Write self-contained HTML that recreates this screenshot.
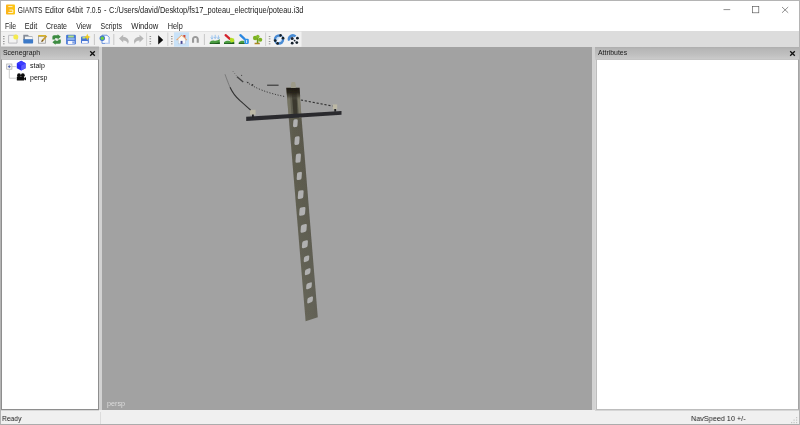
<!DOCTYPE html>
<html><head><meta charset="utf-8"><title>GIANTS Editor</title>
<style>
*{box-sizing:border-box;margin:0;padding:0}
html,body{width:800px;height:425px;overflow:hidden;background:#f0f0f0;font-family:"Liberation Sans",sans-serif;color:#111}
.abs{position:absolute}
.gs,.ph,#view>svg{will-change:transform}
.sx{display:inline-block;transform-origin:0 50%;white-space:nowrap;will-change:transform}
#frame{left:0;top:0;width:800px;height:425px;border:1px solid #b4b4b4;border-bottom-color:#acacac;z-index:10;pointer-events:none}
#title{left:0;top:0;width:800px;height:19px;background:#fff}
#title .t{left:18px;top:6px;font-size:8px;line-height:10px;color:#1c1c1c}
#menu{left:0;top:19px;width:800px;height:12px;background:#fff}
#menu span{position:absolute;top:2px;font-size:8px;line-height:10px;color:#1c1c1c}
#tool{left:0;top:31px;width:800px;height:16px;background:#dcdcdc}
.ph{position:absolute;left:0;top:0;height:13px;width:100%;background:linear-gradient(#aeaeae,#b6b6b6 15%,#c0c0c0 60%,#cdcdcd);font-size:6.9px;line-height:11px;color:#1a1a1a;padding-left:3px}
#left{left:0;top:47px;width:99px;height:364px;background:#d6d6d6}
#left .body{left:1px;top:12px;width:98px;height:351px;background:#fff;border:1px solid #8e8e8e;border-top-color:#c4c4c4}
#spl1{left:99px;top:47px;width:3px;height:363px;background:#d2d2d2}
#view{left:102px;top:47px;width:490.500px;height:363px;background:#a2a2a2;overflow:hidden}
#spl2{left:592px;top:47px;width:4px;height:363px;background:#d2d2d2}
#right{left:595px;top:47px;width:205px;height:364px;background:#d6d6d6}
#right .body{left:0.500px;top:12px;width:203px;height:350.500px;background:#fff;border:1px solid #bdbdbd;border-right-color:#a4a4a4;border-top-color:#c4c4c4}
#status{left:0;top:411px;width:800px;height:14px;background:#f0f0f0;font-size:7.8px;line-height:10px;color:#1c1c1c}
#status span{top:3px}
.tree{font-size:7px;line-height:9px;color:#111}
</style></head><body>
<div id="title" class="abs">
  <svg class="abs" style="left:5px;top:3px" width="11" height="13" viewBox="5 3 11 13"><defs><linearGradient id="lg" x1="0" y1="0" x2="1" y2="0"><stop offset="0" stop-color="#fbb21a"/><stop offset="1" stop-color="#fdc812"/></linearGradient></defs><rect x="6" y="4.600" width="9" height="9.800" rx="0.900" fill="url(#lg)"/><path d="M8.300 6.600h4.200M9.400 10h3.400v2.500h-4.500" stroke="#fff" stroke-width="0.800" fill="none"/></svg>
  <svg class="abs gs" style="left:0;top:0" width="320" height="19" viewBox="0 0 320 19" font-family="Liberation Sans, sans-serif"><text x="17.8" y="12.9" font-size="8.8" fill="#222" textLength="24.7" lengthAdjust="spacingAndGlyphs">GIANTS</text><text x="44.9" y="12.9" font-size="8.8" fill="#222" textLength="19.4" lengthAdjust="spacingAndGlyphs">Editor</text><text x="66.9" y="12.9" font-size="8.8" fill="#222" textLength="16.1" lengthAdjust="spacingAndGlyphs">64bit</text><text x="86.2" y="12.9" font-size="8.8" fill="#222" textLength="15" lengthAdjust="spacingAndGlyphs">7.0.5</text><text x="104.1" y="12.9" font-size="8.8" fill="#222" textLength="2.5" lengthAdjust="spacingAndGlyphs">-</text><text x="109" y="12.9" font-size="8.8" fill="#222" textLength="194.5" lengthAdjust="spacingAndGlyphs">C:/Users/david/Desktop/fs17_poteau_electrique/poteau.i3d</text></svg>
  <svg class="abs" style="left:715px;top:0" width="85" height="19" viewBox="715 0 85 19"><g stroke="#555" stroke-width="0.650" fill="none"><path d="M723.500 9.600H730.200"/><rect x="752.500" y="6.500" width="6.300" height="6.300"/><path d="M782 7L788.200 12.800M788.200 7L782 12.800"/></g></svg>
</div>
<div id="menu" class="abs"><svg class="abs gs" style="left:0;top:0" width="200" height="12" viewBox="0 19 200 12" font-family="Liberation Sans, sans-serif"><text x="5" y="28.9" font-size="8.8" fill="#222" textLength="11" lengthAdjust="spacingAndGlyphs">File</text><text x="24.7" y="28.9" font-size="8.8" fill="#222" textLength="12.5" lengthAdjust="spacingAndGlyphs">Edit</text><text x="46" y="28.9" font-size="8.8" fill="#222" textLength="21" lengthAdjust="spacingAndGlyphs">Create</text><text x="76.2" y="28.9" font-size="8.8" fill="#222" textLength="15" lengthAdjust="spacingAndGlyphs">View</text><text x="100.6" y="28.9" font-size="8.8" fill="#222" textLength="21.3" lengthAdjust="spacingAndGlyphs">Scripts</text><text x="131.2" y="28.9" font-size="8.8" fill="#222" textLength="27.2" lengthAdjust="spacingAndGlyphs">Window</text><text x="167.7" y="28.9" font-size="8.8" fill="#222" textLength="15" lengthAdjust="spacingAndGlyphs">Help</text></svg></div>
<div id="tool" class="abs"><svg class="abs" style="left:0;top:0" width="800" height="16" viewBox="0 31 800 16">
<rect x="0" y="31.6" width="301.5" height="15.2" fill="#f1f1f1"/>
<rect x="0" y="46.500" width="99" height="0.500" fill="#b8b8b8"/>
<g stroke="#c8c8c8" stroke-width="0.8"><path d="M146.6 32.5V46M167.8 32.5V46M265.6 32.5V46"/></g>
<g stroke="#bdbdbd" stroke-width="0.8"><path d="M94.4 34V45M113.8 34V45M204.4 34V45"/></g>
<g filter="url(#tbl)"><rect x="3" y="36" width="1.600" height="0.900" fill="#8a8a8a"/><rect x="3" y="38.4" width="1.600" height="0.900" fill="#8a8a8a"/><rect x="3" y="41" width="1.600" height="0.900" fill="#8a8a8a"/><rect x="3" y="43.4" width="1.600" height="0.900" fill="#8a8a8a"/></g><g filter="url(#tbl)"><rect x="149.5" y="36" width="1.600" height="0.900" fill="#8a8a8a"/><rect x="149.5" y="38.4" width="1.600" height="0.900" fill="#8a8a8a"/><rect x="149.5" y="41" width="1.600" height="0.900" fill="#8a8a8a"/><rect x="149.5" y="43.4" width="1.600" height="0.900" fill="#8a8a8a"/></g><g filter="url(#tbl)"><rect x="171" y="36" width="1.600" height="0.900" fill="#8a8a8a"/><rect x="171" y="38.4" width="1.600" height="0.900" fill="#8a8a8a"/><rect x="171" y="41" width="1.600" height="0.900" fill="#8a8a8a"/><rect x="171" y="43.4" width="1.600" height="0.900" fill="#8a8a8a"/></g><g filter="url(#tbl)"><rect x="268.8" y="36" width="1.600" height="0.900" fill="#8a8a8a"/><rect x="268.8" y="38.4" width="1.600" height="0.900" fill="#8a8a8a"/><rect x="268.8" y="41" width="1.600" height="0.900" fill="#8a8a8a"/><rect x="268.8" y="43.4" width="1.600" height="0.900" fill="#8a8a8a"/></g>
<g filter="url(#tbl)">
<!-- new -->
<g><path d="M8.600 35.300h8.400v7.800h-8.400z" fill="#f3f3f3" stroke="#b8b8bc" stroke-width="0.9"/><circle cx="15.800" cy="36.900" r="2.500" fill="#f4ea50"/></g>
<!-- open -->
<g><path d="M23.300 34.800h4.600l1 1.200h3.400v4h-9z" fill="#848c98"/><path d="M25 36.600h7v3h-7z" fill="#f4f4f4"/><path d="M23.300 39.200h9.800v3.600q0 .8-.8 .8h-8.200q-.8 0-.8-.8z" fill="#3c7ac8"/></g>
<!-- edit -->
<g><rect x="38.500" y="36.400" width="6.900" height="6.800" fill="#efefef" stroke="#9a9a9a" stroke-width="0.8"/><rect x="38.100" y="34.900" width="8" height="1.700" rx="0.5" fill="#d8b428"/><path d="M41.300 42l.7-2.300 3.900-4.300 1.300 1.100-3.900 4.400z" fill="#c89a2a"/><path d="M41.300 42l.7-2.300 1.300 1.200z" fill="#5a4018"/></g>
<!-- refresh -->
<g fill="#3c8c42"><path d="M52.400 39.400v-2.600q0-1.600 1.600-1.600h3.600v-1l3.200 2.600-3.200 2.600v-1.200h-2.600v1.200z"/><path d="M60.800 39.600v2.600q0 1.600-1.600 1.600h-3.600v1l-3.200-2.600 3.200-2.600v1.200h2.600v-1.200z"/></g>
<!-- save -->
<g><rect x="66.100" y="34.700" width="9.800" height="9.800" rx="1.200" fill="#4676d6"/><rect x="68.200" y="35.500" width="5.600" height="2" fill="#b4e084"/><rect x="67.400" y="38" width="7.200" height="2.200" fill="#8ab0ec"/><rect x="67.800" y="41" width="6.600" height="3" fill="#f4f6fc"/><rect x="72.500" y="41.400" width="1.200" height="2.200" fill="#4676d6"/></g>
<!-- save as -->
<g><rect x="81" y="36.400" width="7.800" height="7" rx="0.900" fill="#4676d6"/><rect x="82.400" y="37" width="3" height="1.600" fill="#b4e084"/><rect x="82" y="41" width="5.800" height="2.300" fill="#f4f6fc"/><path d="M87.300 33.800l1 2.200 2.300 1-2.300 1-1 2.200-1-2.200-2.300-1 2.300-1z" fill="#f2cc20"/></g>
<!-- import -->
<g><path d="M102 35.200h5l2.200 2.200v6h-7.200z" fill="#f8fafe" stroke="#6a94dc" stroke-width="1"/><path d="M105 43.400h4.200v-5" fill="none" stroke="#c0d2f2" stroke-width="1"/><circle cx="102.300" cy="38.200" r="2.700" fill="#3f70d0"/><circle cx="102.300" cy="38.200" r="1.700" fill="#6ad040"/></g>
<!-- undo -->
<g fill="#b6b6b6"><path d="M119 38.400l4.200-3.600v2.200c3.200 0 5.500 1.800 5.500 4.600 0 1-.3 1.800-.9 2.400-.2-2.200-1.700-3.600-4.600-3.600v2z"/></g>
<!-- redo -->
<g fill="#b6b6b6"><path d="M143.700 38.400l-4.200-3.600v2.200c-3.200 0-5.500 1.800-5.500 4.600 0 1 .3 1.800.9 2.400.2-2.200 1.700-3.600 4.600-3.600v2z"/></g>
<!-- play -->
<path d="M158.200 35.200v9.400l5-4.700z" fill="#0a0a0a"/>
<!-- home (active) -->
<rect x="174" y="32.300" width="15" height="14.400" fill="#c9e2f8"/>
<g><rect x="178.200" y="38.400" width="7.200" height="5.500" fill="#fafafa" stroke="#b0bccc" stroke-width="0.500"/><path d="M183.300 34.900h2.100v3.400l-2.100-1.600z" fill="#d04a3a"/><path d="M176.200 39.700l5.400-5 5.600 5-.8.700-4.800-4.200-4.600 4.200z" fill="#eaa060"/><path d="M177.600 39.400l4-3.600 4.200 3.600z" fill="#fdf6ee"/><rect x="180.600" y="40.900" width="1.900" height="3" fill="#4a4a98"/></g>
<!-- magnet -->
<path d="M192 42.700v-3.400c0-2 1.300-3.300 3.400-3.300s3.400 1.300 3.400 3.300v3.400h-2.100v-3.400c0-.8-.5-1.300-1.300-1.300s-1.300.5-1.300 1.300v3.400z" fill="#9a9a9a"/>
<!-- terrain sculpt -->
<g><path d="M209.800 43.900v-2c1.400-1.200 2.800-1.600 4.600-1.200 1.800.4 3.600-.2 5.400-1.600v4.800z" fill="#4a9c40"/><path d="M209.800 43.900v-.9c3.200.5 7 .3 10-.8v1.700z" fill="#1f5a1f"/><g stroke="#9cc4ee" stroke-width="1" fill="none"><path d="M212 35.400v3.600M210.800 37.400l1.200 1.800 1.200-1.800M215.200 34.800v3.600M214 36.800l1.200 1.800 1.200-1.800M218.400 35.400v3.600M217.200 37.400l1.200 1.800 1.200-1.800"/></g></g>
<!-- paint red -->
<g><path d="M224 43.900v-1.600c1.800-1.400 3.600-1.700 5.400-1.300 1.600.4 3.200.1 4.800-.9v3.800z" fill="#4a9c40"/><path d="M224 43.900v-.8c3.200.4 7 .2 10.200-.8v1.600z" fill="#1f5a1f"/><path d="M225.600 35.200l4.200 3.600" stroke="#d4202c" stroke-width="2.300" stroke-linecap="round"/><path d="M229.800 38.600l1.400-.8 3 1-.2 3-2.600.6-1.600-1.600z" fill="#b4e024"/></g>
<!-- paint blue -->
<g><path d="M238.800 43.900v-1.600c1.800-1.400 3.600-1.700 5.400-1.300v2.900z" fill="#4a9c40"/><path d="M238.800 43.900v-.8c2 .3 4 .3 6-.1v.9z" fill="#1f5a1f"/><path d="M240.400 35.200l4 3.600" stroke="#2a86e0" stroke-width="2.300" stroke-linecap="round"/><rect x="244.400" y="38.800" width="4.400" height="5.200" rx="1.300" fill="#2a90e8"/><rect x="246.200" y="40" width="0.900" height="3" fill="#e8f6ff"/></g>
<!-- tree -->
<g><path d="M254.600 42.800h5.200v1.400h-5.200z" fill="#b08424"/><path d="M256.800 34.900h1.600v8.200h-1.600z" fill="#6e9c1c"/><ellipse cx="255.200" cy="38" rx="2.300" ry="2.200" fill="#7cb224"/><ellipse cx="260.200" cy="39.800" rx="2.100" ry="2" fill="#7cb224"/><ellipse cx="257.800" cy="36.600" rx="1.800" ry="1.700" fill="#86bc2c"/></g>
<!-- sphere icons -->
<g><circle cx="279" cy="39.500" r="5.200" fill="#4a8cd4"/><circle cx="279" cy="39.500" r="2.800" fill="#cfe2f6"/><path d="M281.500 35.800l-5.500 6.500 1.500 1.200 5.500-6z" fill="#f4f8fc"/><circle cx="280.600" cy="35.400" r="1.300" fill="#16202c"/><circle cx="283" cy="38.200" r="1.400" fill="#16202c"/><circle cx="275.200" cy="40.600" r="1.400" fill="#16202c"/><circle cx="277.600" cy="43.400" r="1.400" fill="#16202c"/></g>
<g><circle cx="293" cy="39.500" r="5.200" fill="#f2f4f8"/><path d="M288 41a5.200 5.200 0 0 1 8.400-5.600l-1.600 1.800a3 3 0 0 0-4.600 3z" fill="#4a8cd4"/><circle cx="292.200" cy="38.400" r="1.500" fill="#1c2430"/><circle cx="297.400" cy="38.200" r="1.400" fill="#16202c"/><circle cx="296.800" cy="42.600" r="1.400" fill="#16202c"/><circle cx="292.200" cy="43.200" r="1.400" fill="#16202c"/><circle cx="294.600" cy="40.600" r="0.900" fill="#16202c"/></g>
</g>
<defs><filter id="tbl" x="-2%" y="-20%" width="104%" height="140%"><feGaussianBlur stdDeviation="0.32"/></filter></defs>
</svg></div>
<div id="left" class="abs"><div class="ph">Scenegraph</div>
<svg class="abs" style="left:89px;top:3px" width="7" height="7" viewBox="0 0 7 7"><path d="M1.200 1.200L5.800 5.800M5.800 1.200L1.200 5.800" stroke="#111" stroke-width="1.300"/></svg>
<div class="abs body"></div><svg class="abs" style="left:0;top:0" width="99" height="40" viewBox="0 47 99 40">
<path d="M9.300 69.500V78.200H16" stroke="#b8b8b8" stroke-width="0.700" fill="none"/>
<path d="M12 66.600H16.500" stroke="#b8b8b8" stroke-width="0.700"/>
<rect x="6.700" y="64" width="5.200" height="5.200" fill="#f4f4f4" stroke="#a8a8a8" stroke-width="0.700"/>
<path d="M7.900 66.600h2.800M9.300 65.200v2.800" stroke="#3a50a8" stroke-width="0.800"/>
<g><path d="M16.800 63.200l4.400-2.400 4.400 2.400v5l-4.400 2.300-4.400-2.300z" fill="#2a2af4"/><path d="M21.200 65.600l4.400-2.400v5l-4.400 2.300z" fill="#5a5aff"/><path d="M16.800 63.200l4.400-2.400 4.400 2.400-4.400 2.400z" fill="#3c3cff"/></g>
<g fill="#0a0a0a"><circle cx="19" cy="75.200" r="1.900"/><circle cx="22.800" cy="75.200" r="1.900"/><rect x="16.800" y="76.600" width="7.400" height="3.800" rx="0.500"/><path d="M24 78.400l2-1.400v3.400l-2-1.200z"/></g>
</svg>
<span class="abs tree sx" style="left:29.500px;top:61px;transform-origin:0 0;transform:translateY(-47px)">stalp</span>
<span class="abs tree sx" style="left:29.700px;top:73.100px;transform-origin:0 0;transform:translateY(-47px)">persp</span></div>
<div id="spl1" class="abs"></div>
<div id="view" class="abs"><svg class="abs" style="left:0;top:0" width="491" height="363" viewBox="102 47 491 363">
<defs>
<linearGradient id="pg" x1="0" y1="0" x2="1" y2="0"><stop offset="0" stop-color="#78766a"/><stop offset="0.22" stop-color="#6b6a5b"/><stop offset="1" stop-color="#626156"/></linearGradient>
<linearGradient id="vg" x1="0" y1="0" x2="0" y2="1"><stop offset="0" stop-color="#1a1810" stop-opacity="0.2"/><stop offset="0.35" stop-color="#1a1810" stop-opacity="0.16"/><stop offset="1" stop-color="#1a1810" stop-opacity="0"/></linearGradient>
<linearGradient id="tg" x1="0" y1="0" x2="0" y2="1"><stop offset="0" stop-color="#1e1a14"/><stop offset="0.4" stop-color="#262219" stop-opacity="0.95"/><stop offset="0.7" stop-color="#3a362b" stop-opacity="0.6"/><stop offset="1" stop-color="#6f6d5e" stop-opacity="0"/></linearGradient>
<filter id="bl" x="-5%" y="-5%" width="110%" height="110%"><feGaussianBlur stdDeviation="0.5"/></filter>
</defs>
<g filter="url(#bl)">
<polygon points="286.300,88.200 299.100,88.200 317.800,317.300 305.600,321.200" fill="url(#pg)"/><polygon points="286.300,88.200 299.100,88.200 317.800,317.300 305.600,321.200" fill="url(#vg)"/>
<polygon points="297,90 299.500,90 301.600,118 299,118" fill="#8a8874" opacity="0.7"/>
<polygon points="286.600,90 289.600,90 291.600,116 288.600,116" fill="#8a8874" opacity="0.5"/>
<polygon points="291.400,89 296.300,89 297.600,116 293.600,116" fill="#2f2c24" opacity="0.72"/>
<polygon points="286.300,87.800 299.600,87.800 300.400,100 287.300,100" fill="url(#tg)"/>
<polygon points="291.100,88 290.700,85 291.700,82 295,82 295.900,85 295.700,88" fill="#9e9b8a"/>
<g fill="#b0b0b0"><rect x="293.2" y="119.3" width="4.4" height="7.8" rx="1.5" transform="rotate(4 295.4 123.2) translate(295.4 123.2) skewY(-8) translate(-295.4 -123.2)"/><rect x="294.6" y="136.4" width="4.8" height="8.4" rx="1.5" transform="rotate(4 297 140.6) translate(297 140.6) skewY(-10) translate(-297 -140.6)"/><rect x="295.7" y="153.7" width="5.0" height="9" rx="1.5" transform="rotate(4 298.2 158.2) translate(298.2 158.2) skewY(-10) translate(-298.2 -158.2)"/><rect x="296.9" y="172.0" width="4.8" height="7.8" rx="1.5" transform="rotate(4 299.3 175.9) translate(299.3 175.9) skewY(-12) translate(-299.3 -175.9)"/><rect x="298.0" y="190.4" width="5.4" height="8.4" rx="1.5" transform="rotate(4 300.7 194.6) translate(300.7 194.6) skewY(-14) translate(-300.7 -194.6)"/><rect x="299.4" y="207.3" width="5.8" height="8.2" rx="1.5" transform="rotate(4 302.3 211.4) translate(302.3 211.4) skewY(-16) translate(-302.3 -211.4)"/><rect x="300.8" y="224.3" width="5.8" height="8.0" rx="1.5" transform="rotate(4 303.7 228.3) translate(303.7 228.3) skewY(-18) translate(-303.7 -228.3)"/><rect x="302.1" y="240.6" width="5.6" height="7.2" rx="1.5" transform="rotate(4 304.9 244.2) translate(304.9 244.2) skewY(-20) translate(-304.9 -244.2)"/><rect x="303.9" y="255.9" width="5.2" height="5.8" rx="1.5" transform="rotate(4 306.5 258.8) translate(306.5 258.8) skewY(-22) translate(-306.5 -258.8)"/><rect x="305.0" y="268.8" width="5.4" height="5.8" rx="1.5" transform="rotate(4 307.7 271.7) translate(307.7 271.7) skewY(-24) translate(-307.7 -271.7)"/><rect x="306.3" y="282.9" width="5.4" height="5.8" rx="1.5" transform="rotate(4 309 285.8) translate(309 285.8) skewY(-24) translate(-309 -285.8)"/><rect x="307.4" y="297.0" width="5.4" height="5.8" rx="1.5" transform="rotate(4 310.1 299.9) translate(310.1 299.9) skewY(-24) translate(-310.1 -299.9)"/></g>
<polygon points="246.200,116.800 341.500,111 341.500,114.800 246.200,120.900" fill="#2a2a2e"/>
<rect x="250" y="109.800" width="5.600" height="5" fill="#bcb8a5"/><rect x="252" y="114.500" width="1.800" height="3" fill="#222"/>
<rect x="332.800" y="104.400" width="4.400" height="5" fill="#bcb8a5"/><rect x="334.300" y="109" width="1.800" height="2.600" fill="#222"/>
<path d="M225 74.200 C227 80 228.600 84 230 87.200" stroke="#444" stroke-width="0.700" fill="none" opacity="0.6"/><path d="M230 87.200 C233 93.600 236.500 97.600 240 100.600 S247.500 107.300 250.600 110" stroke="#303030" stroke-width="1.100" fill="none"/>
<path d="M232.700 71 L237 76.400" stroke="#444" stroke-width="0.900" fill="none" stroke-dasharray="0.900 1.900" opacity="0.7"/><path d="M246.800 82.200 C254 87.600 268 93.500 285.800 96.700" stroke="#353535" stroke-width="1" fill="none" stroke-dasharray="1.100 1.700"/><circle cx="252.500" cy="84.900" r="0.800" fill="#333"/><circle cx="247.800" cy="82.400" r="0.700" fill="#333"/><circle cx="241.600" cy="75.300" r="0.600" fill="#444"/>
<path d="M237 76.800 L243.200 82" stroke="#444" stroke-width="1.400"/>
<path d="M300.800 100 L332.600 106" stroke="#333" stroke-width="1.100" stroke-dasharray="2.200 1.800"/>
<path d="M267.100 85.200 H278.600" stroke="#333" stroke-width="1.100"/>
</g>
<text x="107" y="405.500" font-size="7.400" fill="#dcdcdc" font-family="Liberation Sans, sans-serif" textLength="18" lengthAdjust="spacingAndGlyphs">persp</text>
</svg></div>
<div id="spl2" class="abs"></div>
<div id="right" class="abs"><div class="ph">Attributes</div>
<svg class="abs" style="left:194px;top:3px" width="7" height="7" viewBox="0 0 7 7"><path d="M1.200 1.200L5.800 5.800M5.800 1.200L1.200 5.800" stroke="#111" stroke-width="1.300"/></svg>
<div class="abs body"></div></div>
<div id="status" class="abs"><span class="abs sx" style="left:2px;transform:scaleX(0.86)">Ready</span><span class="abs sx" style="left:691.400px;transform:scaleX(0.93)">NavSpeed 10 +/-</span>
<svg class="abs" style="left:790px;top:5px" width="9" height="9" viewBox="0 0 9 9"><g fill="#c4c4c4"><rect x="6" y="6" width="1.200" height="1.200"/><rect x="6" y="3.500" width="1.200" height="1.200"/><rect x="3.500" y="6" width="1.200" height="1.200"/><rect x="6" y="1" width="1.200" height="1.200"/><rect x="3.500" y="3.500" width="1.200" height="1.200"/><rect x="1" y="6" width="1.200" height="1.200"/></g></svg>
</div>
<div class="abs" style="left:100px;top:412px;width:1px;height:12px;background:#dcdcdc"></div>
<div id="frame" class="abs"></div>
</body></html>
